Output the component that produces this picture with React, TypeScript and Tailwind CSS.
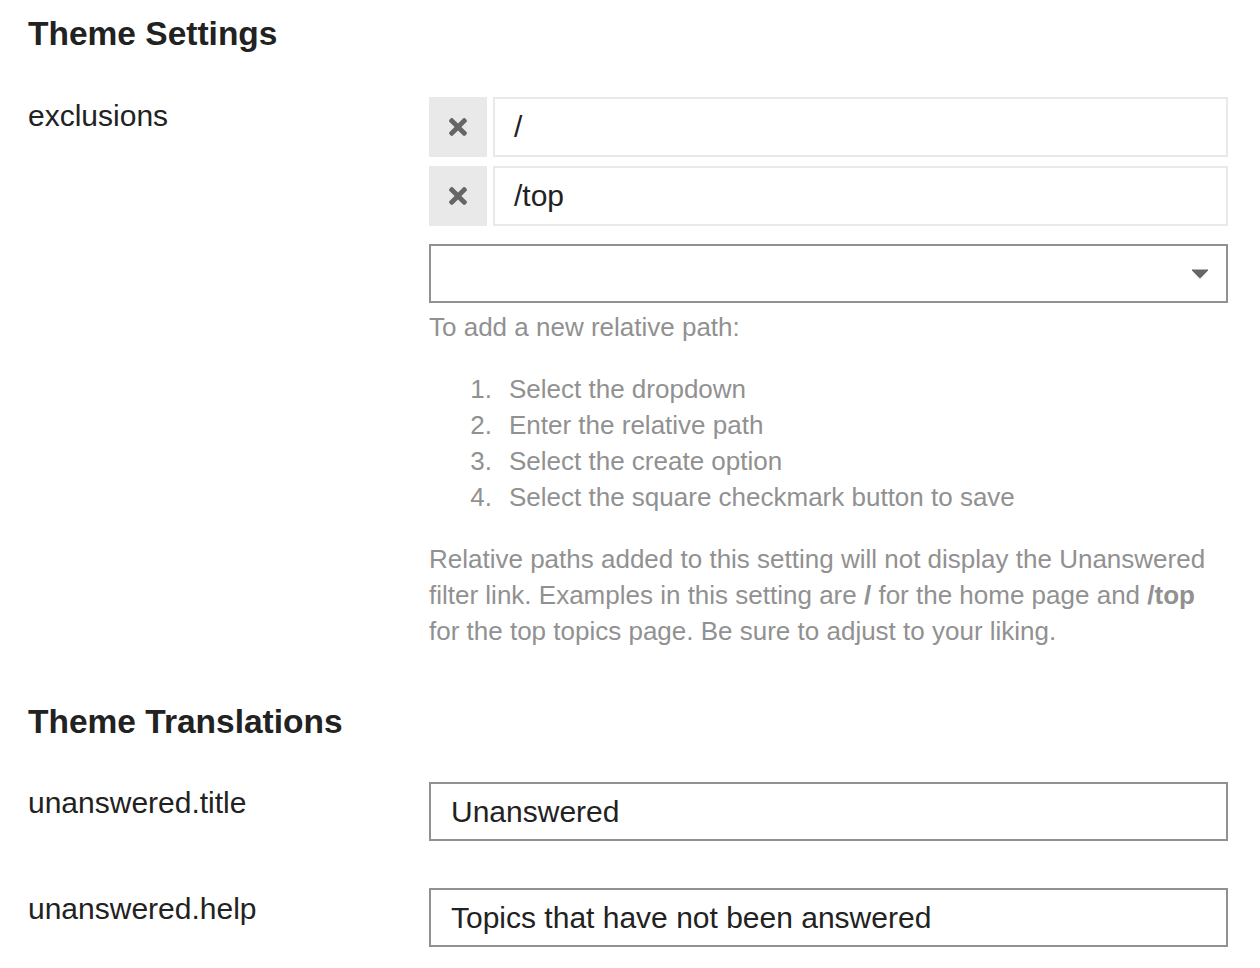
import React from "react";
import { FaTimes } from "react-icons/fa";

const steps = [
  "Select the dropdown",
  "Enter the relative path",
  "Select the create option",
  "Select the square checkmark button to save",
];

function ListRow({ value }: { value: string }) {
  return (
    <div className="flex h-[60px] gap-[6px]">
      <button className="flex w-[58px] shrink-0 items-center justify-center bg-[#e9e9e9] text-[#666]">
        <FaTimes size={26} />
      </button>
      <div className="flex flex-1 items-center border-2 border-[#e9e9e9] bg-white pl-[19px] text-[30px] leading-[36px] text-[#222]">
        {value}
      </div>
    </div>
  );
}

function TextRow({ label, value, top }: { label: string; value: string; top: string }) {
  return (
    <div className={`flex ${top}`}>
      <div className="w-[401px] shrink-0 pt-[3px] text-[30px] leading-[36px] text-[#222]">{label}</div>
      <div className="flex h-[59px] flex-1 items-center border-2 border-[#919191] bg-white pl-[20px] text-[30px] leading-[36px] text-[#222]">
        {value}
      </div>
    </div>
  );
}

export default function App() {
  return (
    <div
      className="min-h-[968px] bg-white pl-[28px] pr-[32px] pt-[14px]"
      style={{ fontFamily: '"Liberation Sans", Arial, Helvetica, sans-serif' }}
    >
      <h3 className="text-[33.5px] font-bold leading-[40px] text-[#222]">Theme Settings</h3>

      <div className="mt-[43px] flex">
        <div className="w-[401px] shrink-0 pt-[1px] text-[30px] leading-[36px] text-[#222]">exclusions</div>
        <div className="flex-1">
          <div className="flex flex-col gap-[9px]">
            <ListRow value="/" />
            <ListRow value="/top" />
          </div>
          <div className="mt-[18px] flex h-[59px] items-center justify-end border-2 border-[#919191] bg-white pr-[17px]">
            <svg width="18" height="10" viewBox="0 0 18 10">
              <path d="M1 1 H17 L9.8 8.6 Q9 9.4 8.2 8.6 Z" fill="#666" stroke="#666" strokeWidth="1" strokeLinejoin="round" />
            </svg>
          </div>
          <div className="mt-[6px] text-[26px] leading-[36px] text-[#919191]">
            <p>To add a new relative path:</p>
            <ol className="mt-[26px] pl-[41px]">
              {steps.map((s, i) => (
                <li key={s} className="flex">
                  <span className="mr-[17px] w-[22px] shrink-0 text-right">{i + 1}.</span>
                  <span>{s}</span>
                </li>
              ))}
            </ol>
            <p className="mt-[26px]">
              Relative paths added to this setting will not display the Unanswered filter link. Examples in this
              setting are <b>/</b> for the home page and <b>/top</b> for the top topics page. Be sure to adjust to
              your liking.
            </p>
          </div>
        </div>
      </div>

      <h3 className="mt-[53px] text-[33.5px] font-bold leading-[40px] text-[#222]">Theme Translations</h3>

      <TextRow label="unanswered.title" value="Unanswered" top="mt-[40px]" />
      <TextRow label="unanswered.help" value="Topics that have not been answered" top="mt-[47px]" />
    </div>
  );
}
